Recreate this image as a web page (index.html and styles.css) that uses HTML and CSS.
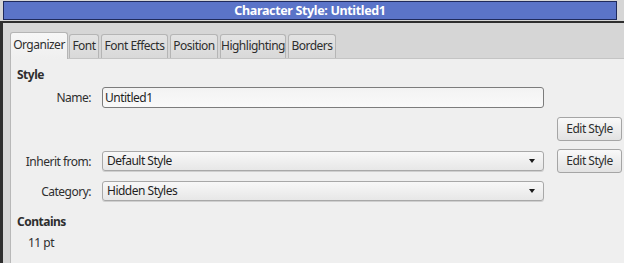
FILE: index.html
```html
<!DOCTYPE html>
<html>
<head>
<meta charset="utf-8">
<link rel="stylesheet" href="styles.css">
</head>
<body>
<div class="titlebar">Character Style: Untitled1</div>
<div class="window">
  <div class="tabs">
    <div class="tab active t-org">Organizer</div>
    <div class="tab t-font">Font</div>
    <div class="tab t-fe">Font Effects</div>
    <div class="tab t-pos">Position</div>
    <div class="tab t-hl">Highlighting</div>
    <div class="tab t-bor">Borders</div>
  </div>
  <div class="panel">
    <div class="heading">Style</div>
    <div class="row name-row">
      <div class="label">Name:</div>
      <div class="field input">Untitled1</div>
    </div>
    <div class="row btn-row">
      <div class="spacer"></div>
      <div class="button">Edit Style</div>
    </div>
    <div class="row inherit-row">
      <div class="label">Inherit from:</div>
      <div class="field combo"><span>Default Style</span><span class="arrow"></span></div>
      <div class="button">Edit Style</div>
    </div>
    <div class="row cat-row">
      <div class="label">Category:</div>
      <div class="field combo"><span>Hidden Styles</span><span class="arrow"></span></div>
    </div>
    <div class="heading contains">Contains</div>
    <div class="value">11 pt</div>
  </div>
</div>
</body>
</html>
```

FILE: styles.css
```css
html, body {
  margin: 0;
  padding: 0;
  width: 624px;
  height: 263px;
  overflow: hidden;
  background: #d6d6d6;
  font-family: "Noto Sans", "Open Sans", sans-serif;
  font-size: 12px;
  letter-spacing: -0.5px;
  color: #2e2e2e;
}
.titlebar {
  margin: 1px 7px 0 3px;
  height: 19px;
  box-sizing: border-box;
  background: #5b74c8;
  border: 1px solid #1f2a5c;
  color: #fff;
  font-weight: bold;
  font-size: 12.5px;
  letter-spacing: -0.35px;
  line-height: 17px;
  text-align: center;
}
.window {
  margin-top: 1px;
  border-top: 2px solid #2e2e2e;
  border-left: 3px solid #2e2e2e;
  padding: 9px 0 0 7px;
  height: 242px;
  box-sizing: border-box;
}
.tabs {
  display: flex;
  align-items: flex-end;
  gap: 2px;
  height: 26px;
}
.tab {
  height: 24px;
  line-height: 22px;
  text-align: center;
  white-space: nowrap;
  background: linear-gradient(#e3e3e3, #d9d9d9);
  border: 1px solid #b5b5b5;
  border-bottom: none;
  border-radius: 3px 3px 0 0;
  box-sizing: border-box;
}
.tab.active {
  height: 27px;
  line-height: 24px;
  background: linear-gradient(#f7f7f7, #efefef);
  margin-bottom: -1px;
  margin-right: -1px;
  position: relative;
  z-index: 1;
}
.t-org { width: 58px; }
.t-font { width: 30px; }
.t-fe { width: 67px; }
.t-pos { width: 48px; }
.t-hl { width: 66px; }
.t-bor { width: 48px; }
.panel {
  background: #efefef;
  border-top: 1px solid #c4c4c4;
  border-left: 1px solid #b8b8b8;
  height: 210px;
  padding: 7px 0 0 6px;
  box-sizing: border-box;
}
.heading {
  font-weight: bold;
  height: 17px;
  line-height: 17px;
}
.row {
  display: flex;
  align-items: center;
}
.label {
  width: 74px;
  text-align: right;
  margin-right: 11px;
}
.field {
  width: 442px;
  height: 21px;
  box-sizing: border-box;
  border: 1px solid #8c8c8c;
  border-radius: 3px;
  padding: 0 4px;
  line-height: 19px;
  color: #1f1f1f;
}
.input {
  background: linear-gradient(#f3f3f3, #f9f9f9);
  border-color: #7c7c7c;
  padding-left: 2px;
}
.combo {
  height: 20px;
  line-height: 18px;
  display: flex;
  justify-content: space-between;
  align-items: center;
  background: linear-gradient(#f8f8f8, #e7e7e7);
  border-color: #a8a8a8;
  box-shadow: 0 1px 0 #cfcfcf;
}
.arrow {
  width: 0;
  height: 0;
  border-left: 3.5px solid transparent;
  border-right: 3.5px solid transparent;
  border-top: 4px solid #1a1a1a;
  margin-right: 4px;
}
.name-row { margin-top: 4px; }
.btn-row { margin-top: 9px; }
.spacer { width: 527px; }
.button {
  width: 65px;
  height: 24px;
  box-sizing: border-box;
  border: 1px solid #a5a5a5;
  border-radius: 3px;
  background: linear-gradient(#f9f9f9, #e2e2e2);
  text-align: center;
  line-height: 22px;
  margin-left: 13px;
}
.btn-row .button { margin-left: 13px; }
.inherit-row { margin-top: 8px; }
.cat-row { margin-top: 8px; }
.contains { margin-top: 12px; }
.value {
  margin-top: 4px;
  height: 17px;
  line-height: 17px;
  padding-left: 11px;
}
```
